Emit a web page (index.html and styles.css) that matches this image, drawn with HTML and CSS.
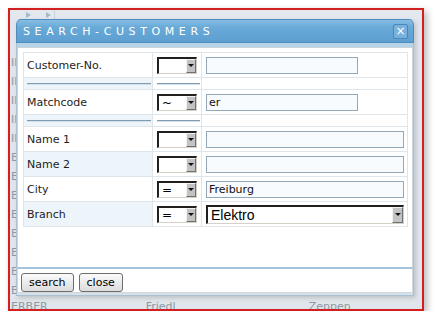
FILE: index.html
```html
<!DOCTYPE html>
<html lang="de">
<head>
    <meta charset="UTF-8">
    <title>Search customers</title>
    <link rel="stylesheet" href="styles.css">
</head>
<body>
    <div class="frame">
        <div class="page">
            <div class="page-bar">
                <span class="tri"></span>
                <span class="tri"></span>
                <span class="page-sep"></span>
            </div>
            <div class="page-rows">
                <div class="page-row">II</div>
                <div class="page-row">II</div>
                <div class="page-row">II</div>
                <div class="page-row">II</div>
                <div class="page-row">II</div>
                <div class="page-row">E</div>
                <div class="page-row">E</div>
                <div class="page-row">E</div>
                <div class="page-row">E</div>
                <div class="page-row">E</div>
                <div class="page-row">E</div>
                <div class="page-row">E</div>
                <div class="page-row">E</div>
                <div class="page-row last"><span>ERBER</span><span>Friedl</span><span>Zeppen</span></div>
            </div>
        </div>

        <div class="dlg">
            <div class="dlg-title">
                <span>SEARCH-CUSTOMERS</span>
                <span class="dlg-close">&times;</span>
            </div>
            <div class="dlg-band"></div>
            <div class="dlg-body">
                <table class="grid">
                    <colgroup>
                        <col class="c-label">
                        <col class="c-op">
                        <col class="c-val">
                    </colgroup>
                    <tr>
                        <td class="lbl">Customer-No.</td>
                        <td class="op"><span class="sel"><span class="sel-val"></span><span class="sel-btn"><i></i></span></span></td>
                        <td class="val"><input class="inp short" type="text" value=""></td>
                    </tr>
                    <tr class="sep">
                        <td class="lbl alt"><div class="rule"></div></td>
                        <td class="op"><div class="rule"></div></td>
                        <td class="val"></td>
                    </tr>
                    <tr>
                        <td class="lbl">Matchcode</td>
                        <td class="op"><span class="sel"><span class="sel-val">~</span><span class="sel-btn"><i></i></span></span></td>
                        <td class="val"><input class="inp short" type="text" value="er"></td>
                    </tr>
                    <tr class="sep">
                        <td class="lbl alt"><div class="rule"></div></td>
                        <td class="op"><div class="rule"></div></td>
                        <td class="val"></td>
                    </tr>
                    <tr>
                        <td class="lbl">Name 1</td>
                        <td class="op"><span class="sel"><span class="sel-val"></span><span class="sel-btn"><i></i></span></span></td>
                        <td class="val"><input class="inp" type="text" value=""></td>
                    </tr>
                    <tr>
                        <td class="lbl alt">Name 2</td>
                        <td class="op"><span class="sel"><span class="sel-val"></span><span class="sel-btn"><i></i></span></span></td>
                        <td class="val"><input class="inp" type="text" value=""></td>
                    </tr>
                    <tr>
                        <td class="lbl">City</td>
                        <td class="op"><span class="sel"><span class="sel-val">=</span><span class="sel-btn"><i></i></span></span></td>
                        <td class="val"><input class="inp" type="text" value="Freiburg"></td>
                    </tr>
                    <tr>
                        <td class="lbl alt">Branch</td>
                        <td class="op"><span class="sel"><span class="sel-val">=</span><span class="sel-btn"><i></i></span></span></td>
                        <td class="val"><span class="sel big"><span class="sel-val">Elektro</span><span class="sel-btn"><i></i></span></span></td>
                    </tr>
                </table>
            </div>
            <div class="dlg-bar">
                <button type="button" class="btn">search</button>
                <button type="button" class="btn">close</button>
            </div>
        </div>
    </div>
</body>
</html>
```

FILE: styles.css
```css
body {
    margin: 0;
    background: #fff;
    font-family: "DejaVu Sans", Verdana, sans-serif;
    font-size: 11px;
    color: #1c1c1c;
}
.frame {
    position: relative;
    margin: 8px 0 0 8px;
    width: 416px;
    height: 303px;
    box-sizing: border-box;
    border: 2px solid #d31f1f;
    background: #dfe5ea;
    overflow: hidden;
    box-shadow: 3px 3px 7px rgba(0, 0, 0, 0.28);
}

/* faded page behind the dialog */
.page {
    color: #8d99a3;
}
.page-bar {
    display: flex;
    align-items: center;
    height: 9px;
    padding-left: 16px;
    gap: 15px;
    background: #e2e8ed;
}
.tri {
    width: 0;
    height: 0;
    border-top: 3px solid transparent;
    border-bottom: 3px solid transparent;
    border-left: 5px solid #a6bacb;
}
.page-sep {
    align-self: stretch;
    width: 1px;
    margin-left: -12px;
    background: #c8d3dc;
}
.page-rows {
    padding-top: 34px;
}
.page-row {
    width: 6px;
    height: 19px;
    line-height: 19px;
    padding-left: 1px;
    overflow: hidden;
    white-space: nowrap;
}
.page-row.last {
    display: flex;
    width: auto;
    height: 14px;
    line-height: 14px;
    overflow: visible;
}
.page-row.last span:nth-child(2) {
    margin-left: 98px;
}
.page-row.last span:nth-child(3) {
    margin-left: 133px;
}

/* dialog */
.dlg {
    position: absolute;
    left: 6px;
    top: 9px;
    width: 398px;
    height: 277px;
    box-sizing: border-box;
    border: 1px solid #a9c1d3;
    border-top-color: #4f8dbf;
    border-radius: 5px 5px 0 0;
    background: #d6e0e8;
    box-shadow: 2px 2px 4px rgba(0, 0, 0, 0.15);
}
.dlg-title {
    display: flex;
    align-items: center;
    justify-content: space-between;
    height: 22px;
    margin: 0 -1px;
    padding: 0 5px 0 6px;
    border-radius: 5px 5px 0 0;
    border: 1px solid #4f8dbf;
    border-top: none;
    background: linear-gradient(#86bde3, #68a9d7 35%, #5d9fd1);
    color: #fff;
    letter-spacing: 4.6px;
}
.dlg-close {
    width: 13px;
    height: 13px;
    line-height: 12px;
    text-align: center;
    letter-spacing: 0;
    font-size: 12px;
    border: 1px solid #4a86b8;
    border-radius: 2px;
    background: #78b2dc;
    margin-top: 1px;
}
.dlg-band {
    height: 4px;
    background: #b6d4e8;
}
.dlg-body {
    height: 220px;
    padding: 4px 4px 0 5px;
    box-sizing: border-box;
    border: 1px solid #c9d4dc;
    border-bottom: none;
    background: #fff;
}
.grid {
    border-collapse: collapse;
    table-layout: fixed;
    width: 384px;
}
.c-label { width: 129px; }
.c-op { width: 49px; }
.c-val { width: 206px; }
.grid td {
    height: 24px;
    padding: 0;
    border: 1px solid #dfe6eb;
    vertical-align: middle;
}
.grid tr.sep td {
    height: 11px;
}
.lbl {
    padding-left: 3px !important;
}
.lbl.alt {
    background: #eef5fa;
}
.op {
    padding-left: 4px !important;
}
.val {
    padding-left: 4px !important;
}
.rule {
    height: 0;
    margin: 0 1px 0 0;
    border-top: 1px solid #7e9db3;
    border-bottom: 1px solid #d3e0e9;
}

.inp {
    display: block;
    width: 198px;
    height: 17px;
    box-sizing: border-box;
    margin: 0;
    padding: 0 2px;
    border: 1px solid #93a9b9;
    background: #f8fbfd;
    font-family: "DejaVu Sans", Verdana, sans-serif;
    font-size: 11px;
    color: #111;
    outline: none;
}
.inp.short {
    width: 152px;
}

/* classic windows style select */
.sel {
    display: flex;
    width: 40px;
    height: 17px;
    box-sizing: border-box;
    border-style: solid;
    border-width: 2px 1px 1px 2px;
    border-color: #202020 #d4d0c8 #d4d0c8 #202020;
    background: #fff;
}
.sel-val {
    flex: 1;
    padding-left: 3px;
    line-height: 14px;
    font-size: 12px;
    color: #000;
}
.sel-btn {
    display: flex;
    align-items: center;
    justify-content: center;
    width: 10px;
    box-sizing: border-box;
    border: 1px solid;
    border-color: #f2f2f2 #707070 #707070 #f2f2f2;
    background: #c3c3c3;
}
.sel-btn i {
    width: 0;
    height: 0;
    border-left: 3px solid transparent;
    border-right: 3px solid transparent;
    border-top: 3px solid #111;
}
.sel.big {
    width: 198px;
    height: 19px;
}
.sel.big .sel-val {
    font-family: "Liberation Sans", Arial, sans-serif;
    font-size: 14px;
    line-height: 16px;
}
.sel.big .sel-btn {
    width: 11px;
}

.dlg-bar {
    display: flex;
    gap: 5px;
    height: 26px;
    padding: 4px 3px 0;
    box-sizing: border-box;
    border: 1px solid #cfd8de;
    border-top: 2px solid #a5c4dc;
    background: #fff;
}
.btn {
    height: 19px;
    margin: 0;
    padding: 0 7px;
    border: 1px solid #6e6e6e;
    border-radius: 3px;
    background: linear-gradient(#fbfbfb, #dcdcdc);
    font-family: "DejaVu Sans", Verdana, sans-serif;
    font-size: 11px;
    color: #000;
    line-height: 16px;
}
```
